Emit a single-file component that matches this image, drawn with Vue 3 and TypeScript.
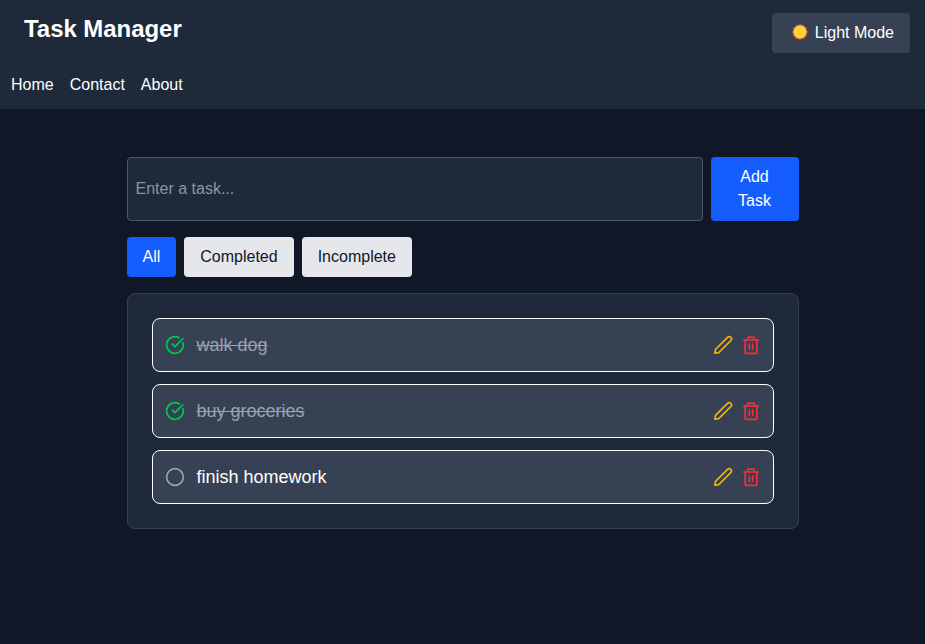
<script setup lang="ts">
import { ref, computed } from 'vue'

interface Task {
  id: number
  text: string
  done: boolean
}

type Filter = 'All' | 'Completed' | 'Incomplete'

const filters: Filter[] = ['All', 'Completed', 'Incomplete']
const active = ref<Filter>('All')
const draft = ref('')
const tasks = ref<Task[]>([
  { id: 1, text: 'walk dog', done: true },
  { id: 2, text: 'buy groceries', done: true },
  { id: 3, text: 'finish homework', done: false },
])

const visible = computed(() =>
  tasks.value.filter((t) => active.value === 'All' || t.done === (active.value === 'Completed')),
)

function addTask() {
  const text = draft.value.trim()
  if (!text) return
  tasks.value.push({ id: Date.now(), text, done: false })
  draft.value = ''
}

function removeTask(id: number) {
  tasks.value = tasks.value.filter((t) => t.id !== id)
}
</script>

<template>
  <div class="page">
    <header class="header">
      <div class="brand">
        <h1>Task Manager</h1>
        <nav>
          <a>Home</a>
          <a>Contact</a>
          <a>About</a>
        </nav>
      </div>
      <button class="mode">
        <svg class="sun" viewBox="0 0 16 16">
          <path
            fill="#f0742c"
            d="M8 0l1.7 1.1 2.1-.2.8 1.9 2 .9-.2 2.1L16 8l-1.4 1.9.2 2.2-2.1.8-.9 2-2.1-.3L8 16l-1.8-1.3-2.1.3-.9-2.1-2-.8.2-2.2L0 8l1.4-2-.2-2.2 2.1-.9.8-1.9 2.2.2z"
          />
          <circle cx="8" cy="8" r="6.2" fill="#ffd43b" />
        </svg>
        <span>Light Mode</span>
      </button>
    </header>

    <main>
      <form class="entry" @submit.prevent="addTask">
        <input v-model="draft" placeholder="Enter a task..." />
        <button class="add">Add Task</button>
      </form>

      <div class="filters">
        <button v-for="f in filters" :key="f" :class="{ active: active === f }" @click="active = f">
          {{ f }}
        </button>
      </div>

      <ul class="list">
        <li v-for="task in visible" :key="task.id">
          <button class="icon" :class="task.done ? 'done' : 'open'" @click="task.done = !task.done">
            <svg v-if="task.done" viewBox="0 0 24 24">
              <path d="M21.6 9.4A10 10 0 1 1 17 3.335" />
              <path d="m9 11 3 3L21.5 4.5" />
            </svg>
            <svg v-else viewBox="0 0 24 24"><circle cx="12" cy="12" r="10" /></svg>
          </button>
          <span class="label" :class="{ struck: task.done }">{{ task.text }}</span>
          <button class="icon edit">
            <svg viewBox="0 0 24 24">
              <path d="M17.4 2.8a2.75 2.75 0 0 1 3.9 3.9L6.9 21.1 2.2 21.9 3 17.2z" />
            </svg>
          </button>
          <button class="icon remove" @click="removeTask(task.id)">
            <svg viewBox="0 0 24 24">
              <path d="M3 6h18" />
              <path d="M19 6v15a1 1 0 0 1-1 1H6a1 1 0 0 1-1-1V6" />
              <path d="M8 6V3.5a1 1 0 0 1 1-1h6a1 1 0 0 1 1 1V6" />
              <path d="M10 11v6M14 11v6" />
            </svg>
          </button>
        </li>
      </ul>
    </main>
  </div>
</template>

<style>
body {
  background: #101828;
}
</style>

<style scoped>
.page {
  min-height: 100vh;
  background: #101828;
  color: #fff;
  font: 16px/24px "Liberation Sans", Arial, sans-serif;
}
.page * {
  box-sizing: border-box;
}
button {
  margin: 0;
  border: 0;
  font: inherit;
  color: inherit;
  cursor: pointer;
}
.header {
  display: flex;
  justify-content: space-between;
  align-items: flex-start;
  height: 109px;
  padding: 13px 15px 0 11px;
  background: #1e2939;
}
h1 {
  margin: 0 0 0 13px;
  font-size: 24px;
  line-height: 32px;
  font-weight: 700;
  letter-spacing: -0.05px;
}
nav {
  display: flex;
  gap: 16px;
  margin-top: 28px;
}
.mode {
  display: flex;
  align-items: center;
  gap: 7px;
  height: 40px;
  padding: 0 16px 0 20px;
  border-radius: 4px;
  background: #364153;
}
.sun {
  width: 16px;
  height: 16px;
  margin-bottom: 2px;
}
main {
  width: 672px;
  margin: 48px auto 0;
}
.entry {
  display: flex;
  gap: 8px;
  height: 64px;
}
input {
  flex: 1;
  min-width: 0;
  padding: 8px;
  border: 1px solid #4a5565;
  border-radius: 4px;
  background: #1e2939;
  color: #fff;
  font: inherit;
  outline: none;
}
input::placeholder {
  color: #8f949c;
}
.add {
  width: 88px;
  padding: 8px 16px;
  border-radius: 4px;
  background: #155dfc;
}
.filters {
  display: flex;
  gap: 8px;
  margin: 16px 0;
}
.filters button {
  padding: 8px 16px;
  border-radius: 4px;
  background: #e5e7eb;
  color: #101828;
}
.filters .active {
  background: #155dfc;
  color: #fff;
}
.list {
  display: flex;
  flex-direction: column;
  gap: 12px;
  margin: 0;
  padding: 24px;
  list-style: none;
  border: 1px solid #364153;
  border-radius: 8px;
  background: #1e2939;
}
li {
  display: flex;
  align-items: center;
  height: 54px;
  padding: 0 12px;
  border: 1px solid #fff;
  border-radius: 8px;
  background: #364153;
}
.label {
  flex: 1;
  margin-left: 12px;
  font-size: 18px;
  line-height: 28px;
}
.struck {
  color: #99a1af;
  text-decoration: line-through;
}
.icon {
  display: flex;
  padding: 0;
  background: none;
}
.icon svg {
  width: 20px;
  height: 20px;
  fill: none;
  stroke: currentColor;
  stroke-width: 2;
  stroke-linecap: round;
  stroke-linejoin: round;
}
.done {
  color: #00c950;
}
.open {
  color: #99a1af;
}
.edit {
  margin-right: 8px;
  color: #f0b100;
}
.remove {
  color: #fb2c36;
}
</style>
